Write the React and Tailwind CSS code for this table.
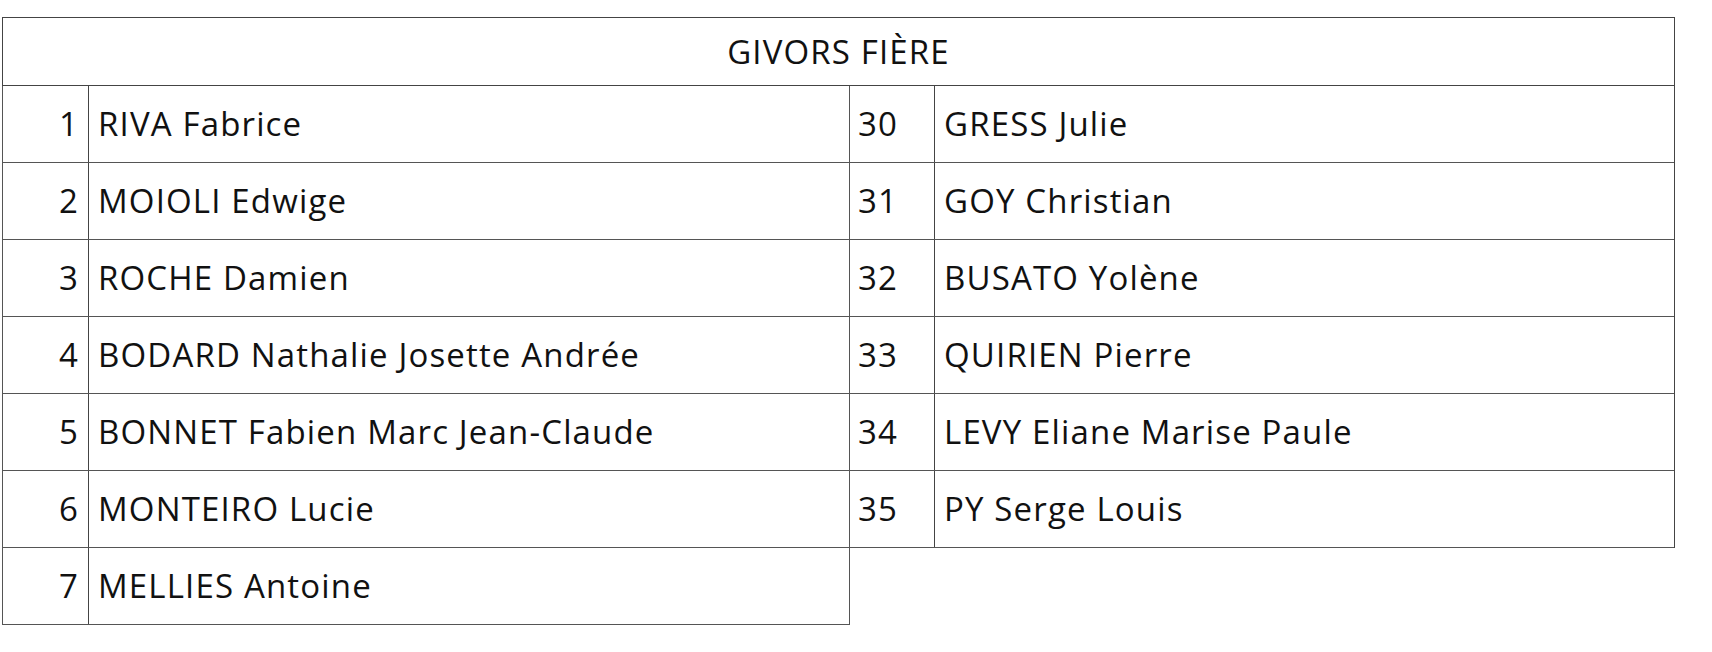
const left = [
  ['1', 'RIVA Fabrice'],
  ['2', 'MOIOLI Edwige'],
  ['3', 'ROCHE Damien'],
  ['4', 'BODARD Nathalie Josette Andrée'],
  ['5', 'BONNET Fabien Marc Jean-Claude'],
  ['6', 'MONTEIRO Lucie'],
  ['7', 'MELLIES Antoine'],
]

const right = [
  ['30', 'GRESS Julie'],
  ['31', 'GOY Christian'],
  ['32', 'BUSATO Yolène'],
  ['33', 'QUIRIEN Pierre'],
  ['34', 'LEVY Eliane Marise Paule'],
  ['35', 'PY Serge Louis'],
]

export default function App() {
  return (
    <div
      className="min-h-[652px] bg-white pl-[2px] pt-[17px] text-[33px] tracking-[0.035em] text-[#111]"
      style={{ fontFamily: '"Open Sans", Lato, sans-serif' }}
    >
      <div className="w-[1673px]">
        {/* Title row */}
        <div className="flex h-[69px] items-center justify-center border border-[#444]">
          GIVORS FIÈRE
        </div>

        <div className="flex items-start">
          {/* Left list */}
          <div className="w-[848px] border-x border-[#555]">
            {left.map(([n, name]) => (
              <div key={n} className="flex h-[77px] border-b border-[#555]">
                <div className="flex w-[86px] items-center justify-end border-r border-[#444] pr-[9px]">
                  {n}
                </div>
                <div className="flex flex-1 items-center pl-[9px]">{name}</div>
              </div>
            ))}
          </div>

          {/* Right list */}
          <div className="flex-1 border-r border-[#444]">
            {right.map(([n, name]) => (
              <div key={n} className="flex h-[77px] border-b border-[#555]">
                <div className="flex w-[85px] items-center border-r border-[#444] pl-[8px]">
                  {n}
                </div>
                <div className="flex flex-1 items-center pl-[9px]">{name}</div>
              </div>
            ))}
          </div>
        </div>
      </div>
    </div>
  )
}
